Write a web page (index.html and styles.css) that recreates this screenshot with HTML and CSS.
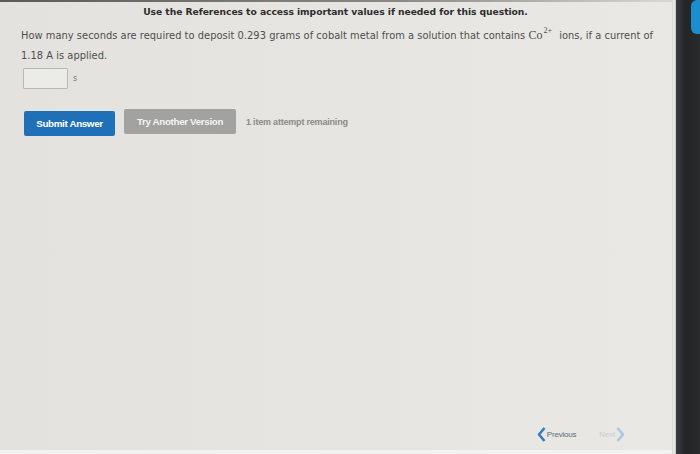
FILE: index.html
```html
<!DOCTYPE html>
<html>
<head>
<meta charset="utf-8">
<link rel="stylesheet" href="styles.css">
</head>
<body>
<div class="screen">
  <div class="page">
    <div class="topbar"></div>
    <div class="content">
      <p class="refs">Use the References to access important values if needed for this question.</p>
      <p class="question">How many seconds are required to deposit 0.293 grams of cobalt metal from a solution that contains <span class="chem">Co<sup>2+</sup></span> ions, if a current of 1.18 A is applied.</p>
      <div class="answer">
        <span class="box"></span><span class="unit">s</span>
      </div>
      <div class="actions">
        <button class="btn submit">Submit Answer</button>
        <button class="btn another">Try Another Version</button>
        <span class="remaining">1 item attempt remaining</span>
      </div>
      <div class="spacer"></div>
      <div class="nav">
        <span class="prev">
          <svg class="chev" width="9" height="15" viewBox="0 0 9 15"><path d="M7.5 1 L2 7.5 L7.5 14" fill="none" stroke="#2d7fc0" stroke-width="2.6" stroke-linejoin="round"/></svg>
          <span>Previous</span>
        </span>
        <span class="next">
          <span>Next</span>
          <svg class="chev" width="9" height="15" viewBox="0 0 9 15"><path d="M1.5 1 L7 7.5 L1.5 14" fill="none" stroke="#a9c7de" stroke-width="2.6" stroke-linejoin="round"/></svg>
        </span>
      </div>
    </div>
    <div class="bottomline"></div>
  </div>
  <div class="edge"></div>
  <div class="bezel"><span class="pill"></span></div>
</div>
</body>
</html>
```
FILE: styles.css
```css
html, body {
  margin: 0;
  padding: 0;
}
body {
  width: 700px;
  height: 454px;
  overflow: hidden;
  background: #e4e3df;
  font-family: "DejaVu Sans", Verdana, sans-serif;
  color: #4a4a4a;
}
.screen {
  display: grid;
  grid-template-columns: 672px 4px 24px;
  height: 454px;
}
.page {
  display: flex;
  flex-direction: column;
  background: linear-gradient(90deg, #e3e2de 0%, #e6e5e1 50%, #e9e8e4 100%);
}
.topbar {
  height: 2px;
  background: linear-gradient(90deg, #5a5a5a, #8a8a88 60%, #d8d8d6);
}
.content {
  flex: 1;
  display: flex;
  flex-direction: column;
  padding: 0 12px 0 21px;
}
.refs {
  margin: 4px 0 0 0;
  font-size: 9.2px;
  line-height: 12px;
  font-weight: bold;
  color: #2e2e2e;
  text-align: center;
  padding-right: 10px;
  letter-spacing: -0.05px;
}
.question {
  margin: 7px 0 0 0;
  font-size: 9.9px;
  line-height: 20px;
  color: #4e4e4e;
  letter-spacing: 0.03px;
}
.chem {
  font-family: "Liberation Serif", "Times New Roman", serif;
  font-size: 12px;
  margin-right: 4px;
}
.chem sup {
  font-size: 8px;
  line-height: 0;
  vertical-align: baseline;
  position: relative;
  top: -6px;
  margin-left: 1px;
}
.answer {
  display: flex;
  align-items: center;
  gap: 5px;
  margin-top: 2px;
  margin-left: 2px;
}
.box {
  width: 43px;
  height: 19px;
  border: 1px solid #b8b8b5;
  background: #ebebe8;
  border-radius: 1px;
}
.unit {
  font-size: 8px;
  color: #777;
  margin-top: -1px;
}
.actions {
  display: flex;
  align-items: center;
  margin-top: 18px;
  margin-left: 3px;
}
.btn {
  border: none;
  font-family: "Liberation Sans", Arial, sans-serif;
  font-weight: bold;
  font-size: 9.8px;
  letter-spacing: -0.35px;
  color: #fff;
  border-radius: 2px;
  padding: 0;
  height: 25px;
}
.submit {
  width: 91px;
  background: #1f70b6;
  margin-top: 4px;
}
.another {
  width: 112px;
  background: #a2a2a0;
  color: #f4f4f2;
  margin-left: 9px;
}
.remaining {
  font-family: "Liberation Sans", Arial, sans-serif;
  font-size: 9px;
  font-weight: bold;
  color: #8a8a88;
  margin-left: 10px;
  letter-spacing: -0.2px;
}
.spacer {
  flex: 1;
}
.nav {
  display: flex;
  justify-content: flex-end;
  align-items: center;
  gap: 23px;
  padding-right: 35px;
  margin-bottom: 8px;
  font-family: "Liberation Sans", Arial, sans-serif;
  font-size: 8px;
  letter-spacing: -0.2px;
}
.prev, .next {
  display: flex;
  align-items: center;
  gap: 1px;
}
.prev {
  color: #5d6c7a;
}
.next {
  color: #c9cdd0;
}
.bottomline {
  height: 4px;
  background: #f2f2f0;
}
.edge {
  background: linear-gradient(90deg, #d2d2cf, #f0f0ee 50%, #bdbdba);
}
.bezel {
  background: linear-gradient(90deg, #3a3b3d, #232426 40%, #2a2b2d);
  display: flex;
  justify-content: flex-end;
  align-items: flex-start;
}
.pill {
  width: 9px;
  height: 34px;
  background: #1c8ed0;
  border-radius: 6px 0 0 6px;
}
```
